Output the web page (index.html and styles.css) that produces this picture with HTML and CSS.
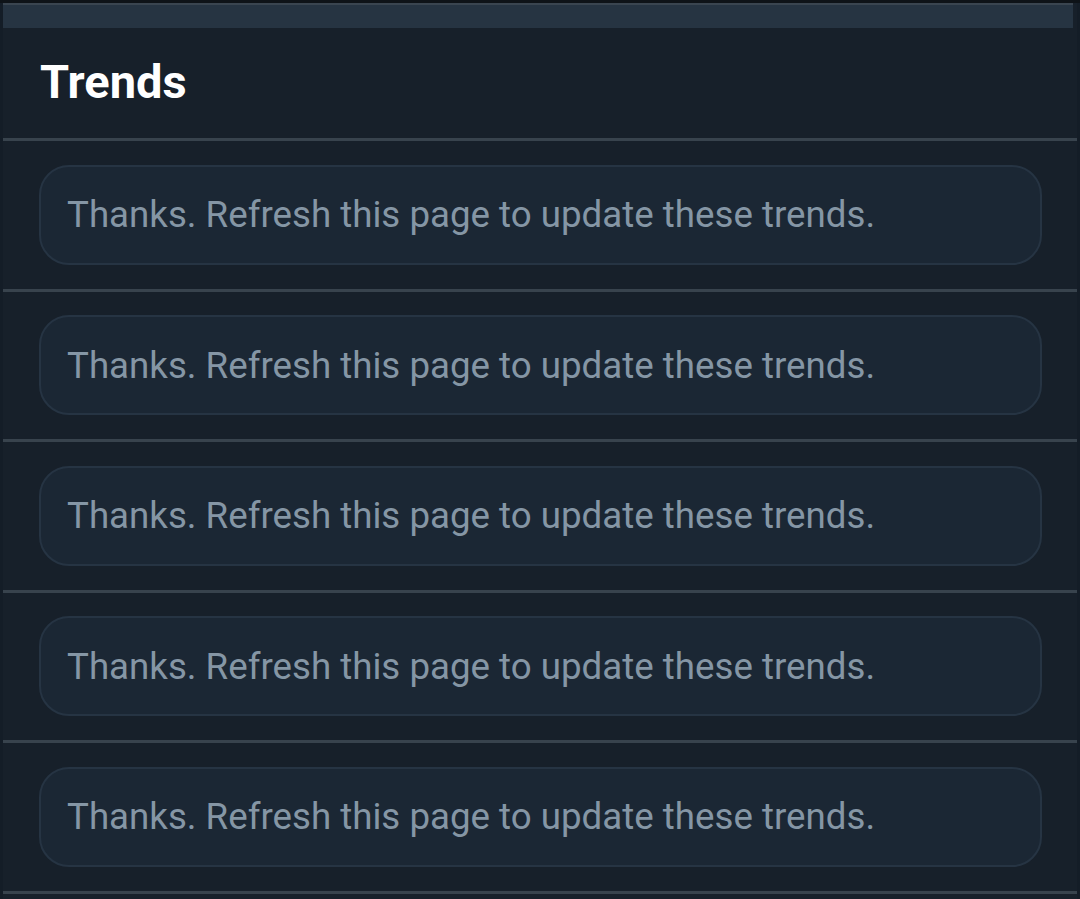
FILE: index.html
```html
<!DOCTYPE html>
<html lang="en">
<head>
<meta charset="utf-8">
<title>Trends</title>
<link rel="stylesheet" href="styles.css">
</head>
<body>
<div class="top-strip"></div>
<div class="panel">
  <div class="bar"></div>
  <div class="header"><h2 class="title">Trends</h2></div>
  <div class="row"><div class="card">Thanks. Refresh this page to update these trends.</div></div>
  <div class="row"><div class="card">Thanks. Refresh this page to update these trends.</div></div>
  <div class="row"><div class="card">Thanks. Refresh this page to update these trends.</div></div>
  <div class="row"><div class="card">Thanks. Refresh this page to update these trends.</div></div>
  <div class="row"><div class="card">Thanks. Refresh this page to update these trends.</div></div>
  <div class="tail"></div>
</div>
</body>
</html>
```
FILE: styles.css
```css
html, body {
  margin: 0;
  padding: 0;
  background: #141d27;
  font-family: Roboto, "Liberation Sans", sans-serif;
  overflow: hidden;
  height: 899px;
}
.top-strip {
  height: 3px;
  background: #0e1318;
}
.panel {
  margin: 0 3px;
  background: #17202a;
}
.bar {
  height: 25px;
  background: #263442;
  border-top: 2px solid #3a4550;
  box-sizing: border-box;
  margin-right: 4px;
}
.header {
  height: 113px;
  border-bottom: 3px solid #38434d;
  box-sizing: border-box;
  display: flex;
  align-items: flex-start;
  padding-left: 37px;
}
.title {
  margin: 0;
  padding-top: 26px;
  font-size: 47px;
  font-weight: 700;
  color: #ffffff;
  line-height: 1.2;
}
.row {
  border-bottom: 3px solid #38434d;
  padding: 23.5px 35px 24px 36px;
}
.card {
  height: 100px;
  box-sizing: border-box;
  border: 2px solid #263443;
  border-radius: 30px;
  background: #1b2734;
  display: flex;
  align-items: center;
  padding-left: 26px;
  font-size: 36.7px;
  color: #8596a5;
}
.tail {
  height: 40px;
}
```
